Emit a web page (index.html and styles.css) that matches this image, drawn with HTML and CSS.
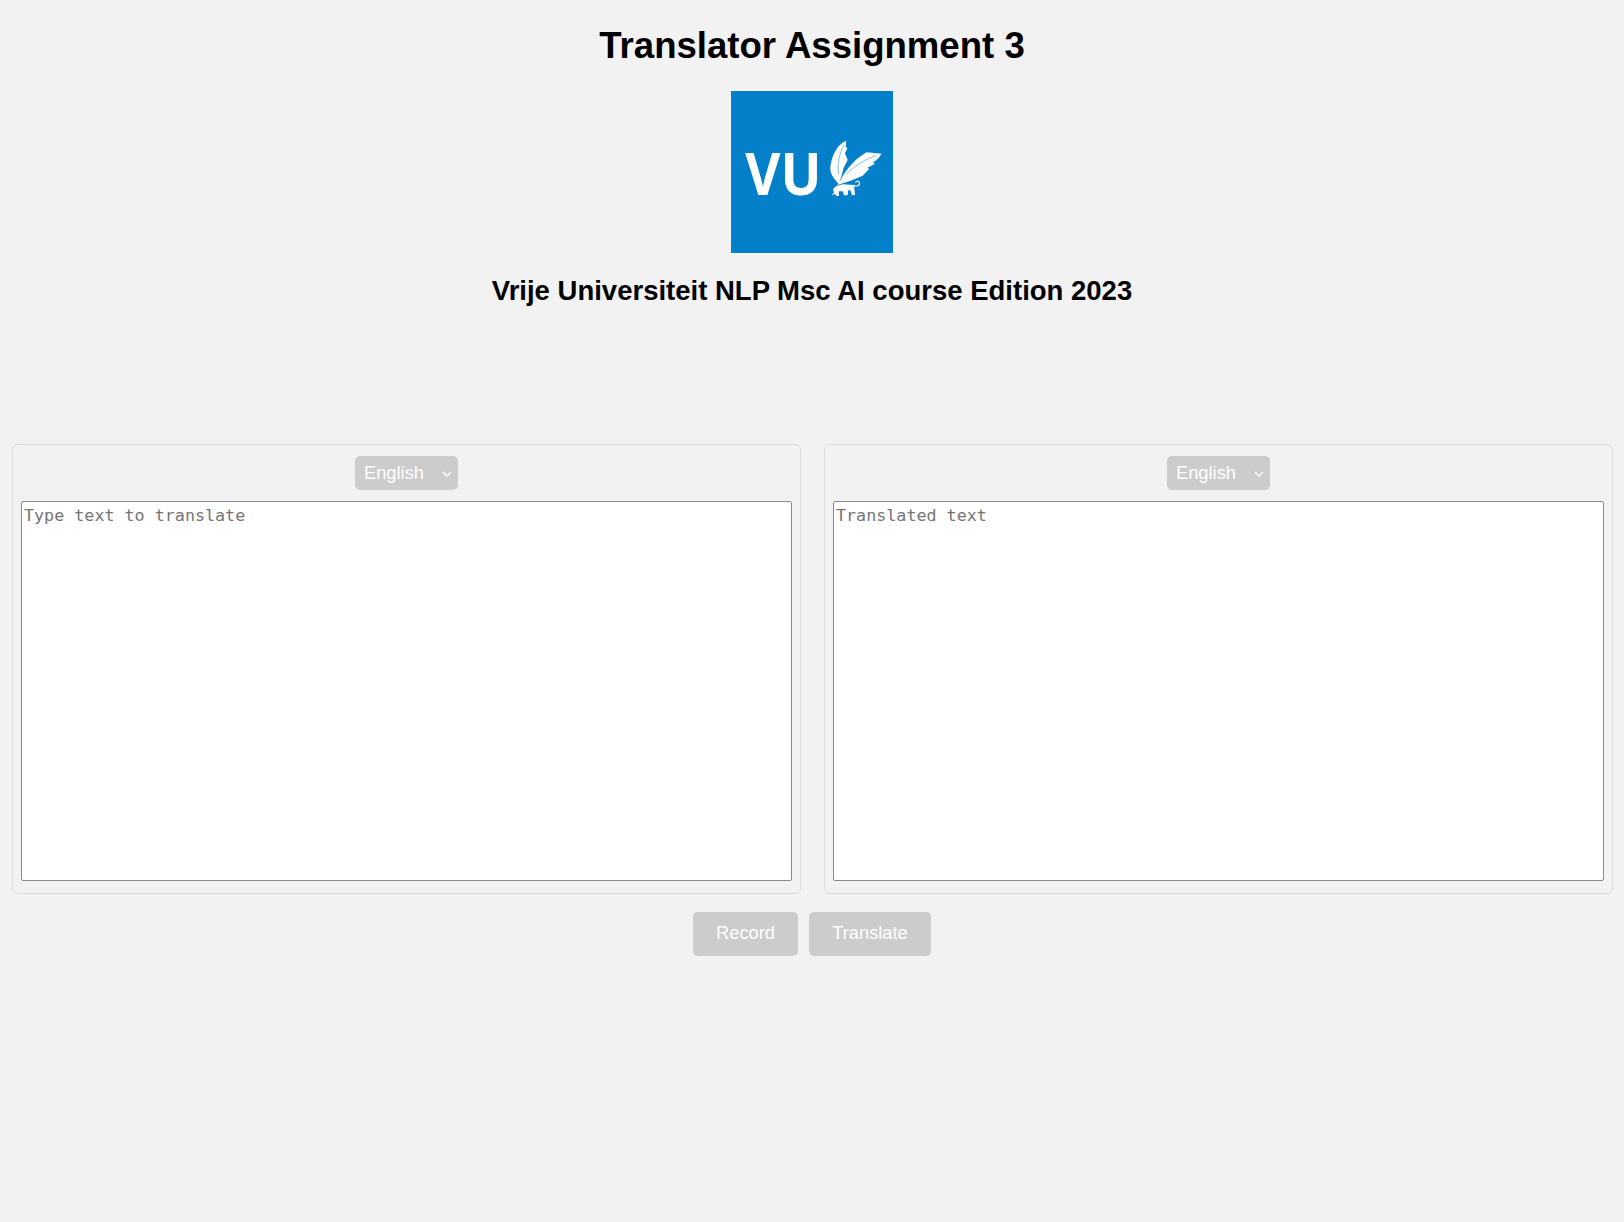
FILE: index.html
```html
<!DOCTYPE html>
<html lang="en">
<head>
<meta charset="utf-8">
<title>Translator Assignment 3</title>
<link rel="stylesheet" href="styles.css">
</head>
<body>
<header class="header">
  <h1 class="title">Translator Assignment 3</h1>
  <svg class="logo" viewBox="33 18 486 486" role="img" aria-label="VU logo">
    <rect x="33" y="18" width="486" height="486" fill="#0480cb"/>
    <text class="logo-text" x="76" y="329" textLength="229" lengthAdjust="spacingAndGlyphs">VU</text>
    <path fill="#fff" d="M379 167 C353 178 337 205 331 245 C329 266 343 282 356 296 L364 275 L371 248 L383 225 L375 205 L382 190 L377 185 Z"/>
    <path fill="#fff" d="M485 206 L440 202 C408 220 382 248 362 284 L352 300 L392 287 L428 272 L448 251 L441 249 L465 236 L459 233 L475 220 Z"/>
    <path fill="none" stroke="#0480cb" stroke-width="1.5" d="M356 268 C351 240 357 205 373 180 M378 268 C402 245 430 225 468 212"/>
    <path fill="#fff" d="M335 331 L342 322 L339 312 L349 303 L368 298 L402 300 L405 330 L396 331 L392 317 L385 315 L383 331 L372 331 L368 319 L356 319 L357 333 L348 333 L346 326 Z"/>
    <path fill="none" stroke="#fff" stroke-width="3.5" d="M400 301 C413 306 421 300 418 292 C415 286 408 288 407 293"/>
  </svg>
  <h2 class="subtitle">Vrije Universiteit NLP Msc AI course Edition 2023</h2>
</header>
<main class="panels">
  <section class="panel">
    <select class="lang"><option>English</option></select>
    <textarea class="box" placeholder="Type text to translate"></textarea>
  </section>
  <section class="panel">
    <select class="lang"><option>English</option></select>
    <textarea class="box" placeholder="Translated text"></textarea>
  </section>
</main>
<div class="actions">
  <button class="btn record">Record</button>
  <button class="btn translate">Translate</button>
</div>
</body>
</html>
```
FILE: styles.css
```css
* { box-sizing: border-box; }
html, body { height: 100%; }
body {
  margin: 0;
  background: #f2f2f2;
  font-family: "Liberation Sans", Arial, sans-serif;
  overflow: hidden;
}
.header {
  display: flex;
  flex-direction: column;
  align-items: center;
  padding-top: 23px;
}
.title {
  margin: 0;
  font-size: 36.6px;
  line-height: 45px;
  font-weight: 700;
  color: #000;
}
.logo {
  display: block;
  width: 162px;
  height: 162px;
  margin-top: 23px;
}
.logo-text {
  font-family: "Open Sans", sans-serif;
  font-weight: 700;
  font-size: 178px;
  fill: #fff;
}
.subtitle {
  margin: 20px 0 0;
  font-size: 27.5px;
  line-height: 35px;
  font-weight: 700;
  color: #000;
}
.panels {
  display: grid;
  grid-template-columns: 789px 789px;
  column-gap: 23px;
  margin: 136px 12px 0;
}
.panel {
  display: flex;
  flex-direction: column;
  align-items: center;
  height: 450px;
  padding: 11px 8px 12px;
  border: 1px solid #dcdcdc;
  border-radius: 6px;
}
.lang {
  width: 103px;
  height: 34px;
  padding: 0 0 2px 9px;
  border: 0;
  border-radius: 5px;
  appearance: none;
  background-color: #cccccc;
  background-image: url("data:image/svg+xml,%3Csvg xmlns='http://www.w3.org/2000/svg' width='10' height='6' viewBox='0 0 10 6'%3E%3Cpath d='M1 1l4 4 4-4' fill='none' stroke='%23ffffff' stroke-width='1.4'/%3E%3C/svg%3E");
  background-repeat: no-repeat;
  background-position: 87px 15px;
  color: #fff;
  font-family: "Liberation Sans", Arial, sans-serif;
  font-size: 18.3px;
}
.box {
  display: block;
  width: 100%;
  height: 380px;
  margin-top: 11px;
  padding: 3px 2px;
  border: 1px solid #8a8a8a;
  border-radius: 2px;
  background: #fff;
  resize: none;
  font-family: "DejaVu Sans Mono", monospace;
  font-size: 16.72px;
}
.box::placeholder { color: #757575; opacity: 1; }
.actions {
  display: flex;
  justify-content: center;
  gap: 11px;
  margin-top: 18px;
}
.btn {
  height: 44px;
  padding: 0 0 2px;
  border: 0;
  border-radius: 5px;
  background: #cccccc;
  color: #fff;
  font-family: "Liberation Sans", Arial, sans-serif;
  font-size: 18.3px;
}
.record { width: 105px; }
.translate { width: 122px; }
```
